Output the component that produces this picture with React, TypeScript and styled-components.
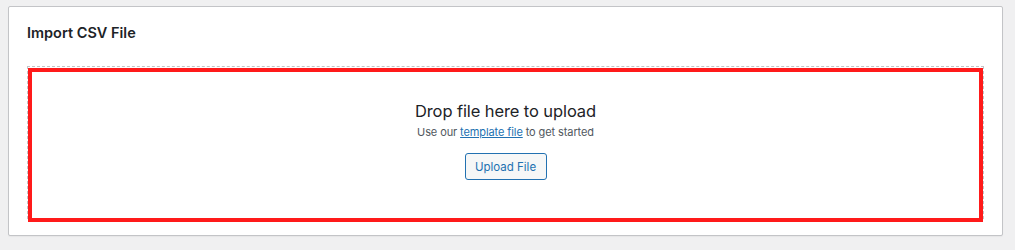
import React from 'react';
import styled, { createGlobalStyle } from 'styled-components';

const GlobalStyle = createGlobalStyle`
  body {
    margin: 0;
    background: #f0f0f1;
    font-family: Inter, "Liberation Sans", sans-serif;
    color: #1d2327;
  }
`;

const Page = styled.div`
  padding: 6px 12px 14px 8px;
`;

const Card = styled.div`
  background: #fff;
  border: 1px solid #c3c4c7;
  border-radius: 2px;
  box-shadow: 0 1px 1px rgba(0, 0, 0, 0.04);
  padding: 16px 18px 16px 18px;
`;

const CardTitle = styled.h2`
  margin: 0 0 23px;
  font-size: 14.5px;
  line-height: 20px;
  font-weight: 600;
  color: #1d2327;
`;

const DropZone = styled.div`
  position: relative;
  border: 1px dashed #c3c4c7;
  height: 151px;
  box-sizing: content-box;
  display: flex;
  flex-direction: column;
  align-items: center;

  &::after {
    content: '';
    position: absolute;
    left: 0;
    top: 1px;
    right: 0;
    bottom: -4px;
    border: 4px solid #ff1a1a;
    pointer-events: none;
  }
`;

const DropTitle = styled.h3`
  margin: 32px 0 1px;
  font-size: 16.5px;
  line-height: 24px;
  font-weight: 400;
  letter-spacing: -0.1px;
  color: #1d2327;
`;

const DropHint = styled.p`
  margin: 0 0 13px;
  font-size: 11px;
  line-height: 16px;
  letter-spacing: -0.1px;
  color: #50575e;

  a {
    color: #2271b1;
    text-decoration: underline;
  }
`;

const UploadButton = styled.button`
  width: 82px;
  height: 27px;
  padding: 0;
  font-family: inherit;
  font-size: 11.5px;
  color: #2271b1;
  background: #f6f7f7;
  border: 1px solid #2271b1;
  border-radius: 3px;
  cursor: pointer;
`;

export default function App() {
  return (
    <>
      <GlobalStyle />
      <Page>
        <Card>
          <CardTitle>Import CSV File</CardTitle>
          <DropZone>
            <DropTitle>Drop file here to upload</DropTitle>
            <DropHint>
              Use our <a href="#">template file</a> to get started
            </DropHint>
            <UploadButton type="button">Upload File</UploadButton>
          </DropZone>
        </Card>
      </Page>
    </>
  );
}
